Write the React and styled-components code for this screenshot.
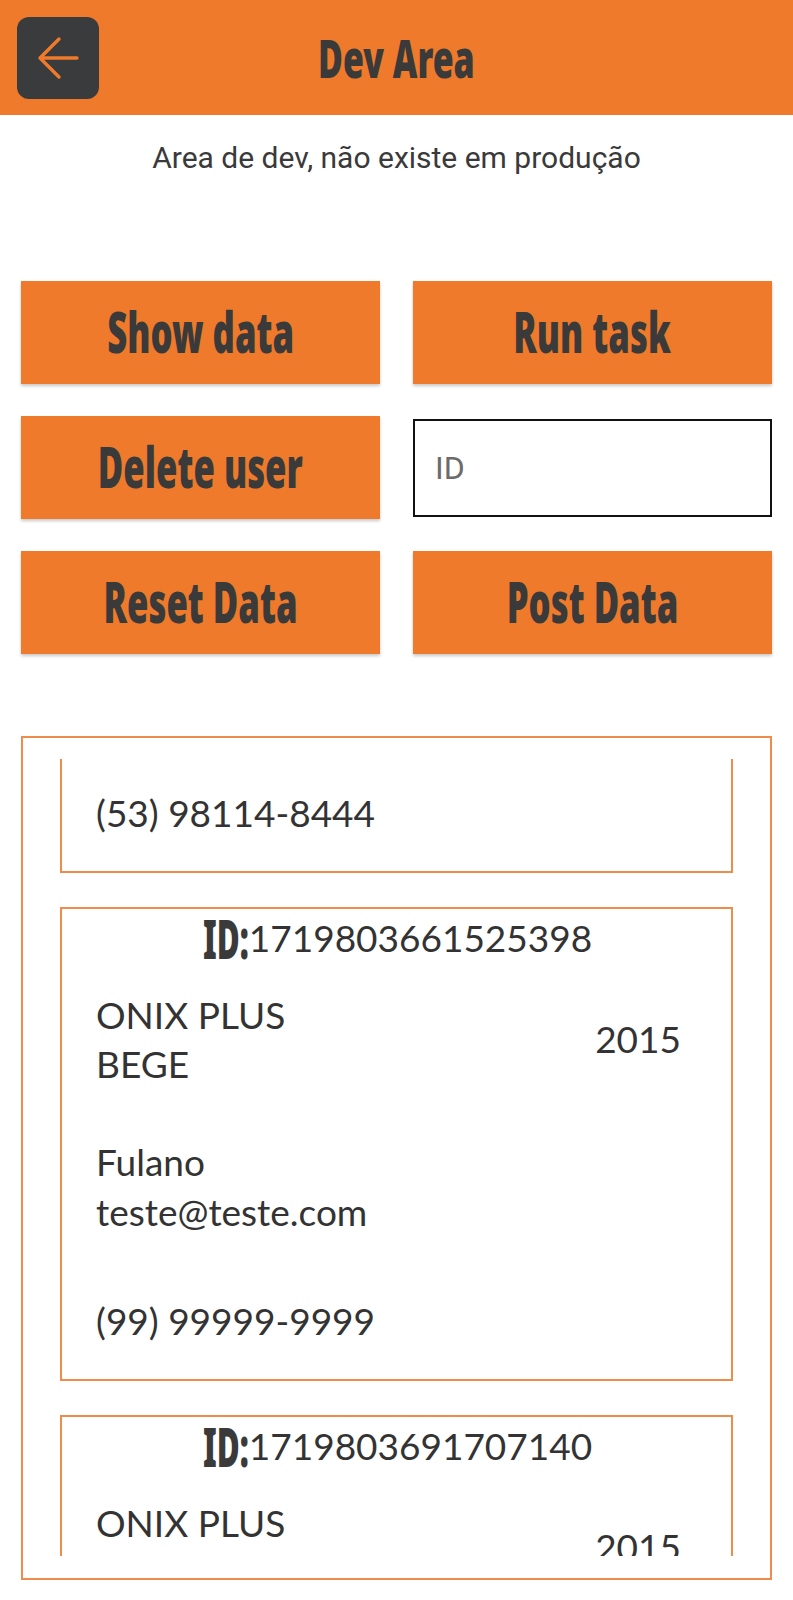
import React, { useLayoutEffect, useRef } from "react";
import styled, { createGlobalStyle } from "styled-components";

const ORANGE = "#EF7A2B";
const LINE = "#EF8C4B";
const DARK = "#3A3A3A";
const HEAVY = `"Noto Sans", "DejaVu Sans", sans-serif`;

const GlobalStyle = createGlobalStyle`
  html, body { margin: 0; padding: 0; background: #fff; }
  body { font-family: Roboto, "Liberation Sans", sans-serif; }
  *, *::before, *::after { box-sizing: border-box; }
`;

const Page = styled.div`
  width: 793px;
  min-height: 1600px;
  display: flex;
  flex-direction: column;
  background: #fff;
`;

const Header = styled.header`
  height: 115px;
  background: ${ORANGE};
  display: grid;
  grid-template-columns: 82px 1fr 82px;
  align-items: center;
  padding: 0 17px;
`;

const BackButton = styled.button`
  width: 82px;
  height: 82px;
  border: none;
  border-radius: 12px;
  background: #3a3b3c;
  padding: 0;
  display: flex;
  align-items: center;
  justify-content: center;
  cursor: pointer;
`;

/* Anton-like display face: a heavy sans narrowed horizontally */
const Squeezed = styled.span`
  display: inline-block;
  white-space: nowrap;
  transform: scaleX(${(p) => p.$scale ?? 0.62});
`;

const Title = styled.h1`
  margin: 0;
  text-align: center;
  font-family: ${HEAVY};
  font-weight: 900;
  font-size: 53px;
  line-height: 64px;
  color: ${DARK};
`;

const Subtitle = styled.p`
  margin: 25px 0 0;
  text-align: center;
  font-family: Roboto, sans-serif;
  font-size: 30px;
  line-height: 36px;
  color: ${DARK};
`;

const Actions = styled.div`
  margin-top: 105px;
  padding: 0 21px;
  display: grid;
  grid-template-columns: 1fr 1fr;
  grid-auto-rows: 103px;
  column-gap: 33px;
  row-gap: 32px;
  align-items: stretch;
`;

const ActionButton = styled.button`
  border: none;
  background: ${ORANGE};
  box-shadow: 0 2px 3px rgba(0, 0, 0, 0.22);
  display: flex;
  align-items: center;
  justify-content: center;
  padding: 0 0 3px;
  cursor: pointer;
  font-family: ${HEAVY};
  font-weight: 900;
  font-size: 56px;
  line-height: 78px;
  color: ${DARK};
`;

const IdInput = styled.input`
  align-self: center;
  height: 98px;
  width: 100%;
  border: 2px solid #111;
  border-radius: 0;
  padding: 0 20px;
  font-family: Roboto, sans-serif;
  font-size: 32px;
  color: #222;
  background: #fff;
  outline: none;
  &::placeholder {
    color: #6b6b6b;
  }
`;

const ListBox = styled.section`
  margin: 82px 21px 0;
  border: 2px solid ${LINE};
  padding: 21px 37px 22px;
`;

const Scroller = styled.div`
  height: 797px;
  overflow-y: auto;
  scrollbar-width: none;
  display: flex;
  flex-direction: column;
  gap: 34px;
  &::-webkit-scrollbar {
    display: none;
  }
`;

const Card = styled.article`
  flex: none;
  border: 2px solid ${LINE};
  padding: 4px 32px 33px 34px;
  display: flex;
  flex-direction: column;
  font-family: Lato, "Liberation Sans", sans-serif;
  font-size: 37px;
  line-height: 50px;
  color: #333;
`;

const IdLine = styled.div`
  height: 50px;
  text-align: center;
  white-space: nowrap;
`;

const IdLabel = styled.span`
  display: inline-block;
  font-family: ${HEAVY};
  font-weight: 900;
  font-size: 54px;
  line-height: 40px;
  color: ${DARK};
  vertical-align: -7px;
  transform: scaleX(0.58);
  transform-origin: left center;
  margin-right: -33px;
`;

const ModelRow = styled.div`
  margin-top: 27px;
  display: flex;
  align-items: center;
  justify-content: space-between;
`;

const Stack = styled.div`
  display: flex;
  flex-direction: column;
`;

const ModelStack = styled(Stack)`
  line-height: 49px;
`;

const Year = styled.span`
  margin-right: 18px;
`;

const Person = styled(Stack)`
  margin-top: 49px;
`;

const Phone = styled.div`
  margin-top: 59px;
`;

const cars = [
  {
    id: "1719803575116052",
    model: "ONIX PLUS",
    color: "PRETO",
    year: "2015",
    name: "Ciclano",
    email: "teste@teste.com",
    phone: "(53) 98114-8444",
  },
  {
    id: "1719803661525398",
    model: "ONIX PLUS",
    color: "BEGE",
    year: "2015",
    name: "Fulano",
    email: "teste@teste.com",
    phone: "(99) 99999-9999",
  },
  {
    id: "1719803691707140",
    model: "ONIX PLUS",
    color: "BEGE",
    year: "2015",
    name: "Fulano",
    email: "teste@teste.com",
    phone: "(99) 99999-9999",
  },
];

const actions = [
  { label: "Show data" },
  { label: "Run task" },
  { label: "Delete user" },
  { input: true },
  { label: "Reset Data" },
  { label: "Post Data" },
];

function BackArrow() {
  return (
    <svg width="82" height="82" viewBox="0 0 82 82" fill="none" aria-hidden="true">
      <path
        d="M60 41H23M42 22L23 41L42 60"
        stroke={ORANGE}
        strokeWidth="3.4"
        strokeLinecap="round"
        strokeLinejoin="round"
      />
    </svg>
  );
}

function CarCard({ car }) {
  return (
    <Card>
      <IdLine>
        <IdLabel>ID:</IdLabel>
        {car.id}
      </IdLine>
      <ModelRow>
        <ModelStack>
          <span>{car.model}</span>
          <span>{car.color}</span>
        </ModelStack>
        <Year>{car.year}</Year>
      </ModelRow>
      <Person>
        <span>{car.name}</span>
        <span>{car.email}</span>
      </Person>
      <Phone>{car.phone}</Phone>
    </Card>
  );
}

export default function App() {
  const scrollRef = useRef(null);
  useLayoutEffect(() => {
    if (scrollRef.current) scrollRef.current.scrollTop = 360;
  }, []);

  return (
    <>
      <GlobalStyle />
      <Page>
        <Header>
          <BackButton aria-label="Voltar">
            <BackArrow />
          </BackButton>
          <Title>
            <Squeezed $scale={0.64}>Dev Area</Squeezed>
          </Title>
          <span />
        </Header>
        <Subtitle>Area de dev, não existe em produção</Subtitle>
        <Actions>
          {actions.map((a, i) =>
            a.input ? (
              <IdInput key={i} placeholder="ID" />
            ) : (
              <ActionButton key={i}>
                <Squeezed>{a.label}</Squeezed>
              </ActionButton>
            )
          )}
        </Actions>
        <ListBox>
          <Scroller ref={scrollRef}>
            {cars.map((car) => (
              <CarCard key={car.id} car={car} />
            ))}
          </Scroller>
        </ListBox>
      </Page>
    </>
  );
}
